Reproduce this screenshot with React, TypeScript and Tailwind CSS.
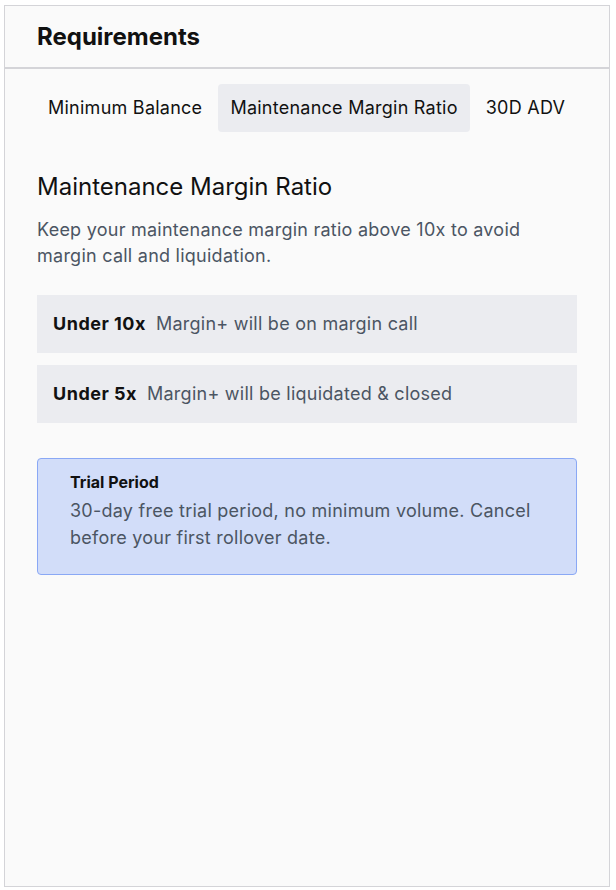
import { useState } from "react"

const tabs = ["Minimum Balance", "Maintenance Margin Ratio", "30D ADV"]

const rules = [
  { level: "Under 10x", text: "Margin+ will be on margin call" },
  { level: "Under 5x", text: "Margin+ will be liquidated & closed" },
]

export default function App() {
  const [active, setActive] = useState(1)

  return (
    <div className="min-h-screen bg-white pt-[5px] pl-[4px] font-['Inter',sans-serif]">
      <div className="w-[606px] h-[882px] border border-[#d4d4d8] bg-[#fafafa] flex flex-col">
        <div className="h-[63px] flex items-center px-8 border-b-2 border-[#d4d4d8]">
          <h2 className="text-[24px] font-bold text-[#111]">Requirements</h2>
        </div>

        <div className="flex gap-1 pl-[31px] mt-[15px]">
          {tabs.map((t, i) => (
            <button
              key={t}
              onClick={() => setActive(i)}
              className={`px-3 h-[48px] text-[18px] leading-6 tracking-[0.25px] text-[#111] rounded-sm ${
                i === active ? "bg-[#ebecf0]" : ""
              }`}
            >
              {t}
            </button>
          ))}
        </div>

        <div className="px-8 pt-[41px]">
          <h3 className="text-[24px] leading-7 text-[#111]">Maintenance Margin Ratio</h3>
          <p className="mt-[16px] text-[18px] leading-[26px] tracking-[0.25px] text-[#4b5563]">
            Keep your maintenance margin ratio above 10x to avoid margin call and liquidation.
          </p>

          <div className="mt-[26px] flex flex-col gap-3">
            {rules.map((r) => (
              <div key={r.level} className="h-[58px] bg-[#ebecf0] flex items-center px-4 pb-[2px] text-[18px]">
                <span className="font-bold tracking-[0.5px] text-[#111]">{r.level}</span>
                <span className="ml-2.5 tracking-[0.25px] text-[#4b5563]">{r.text}</span>
              </div>
            ))}
          </div>

          <div className="mt-[35px] rounded-[4px] border border-[#8aa8f5] bg-[#d2ddf9] px-8 pt-[11px] pb-[23px]">
            <div className="text-[16px] leading-6 font-bold text-[#111]">Trial Period</div>
            <p className="mt-[3px] text-[18px] leading-[27px] tracking-[0.25px] text-[#4b5563]">
              30-day free trial period, no minimum volume. Cancel before your first rollover date.
            </p>
          </div>
        </div>
      </div>
    </div>
  )
}
